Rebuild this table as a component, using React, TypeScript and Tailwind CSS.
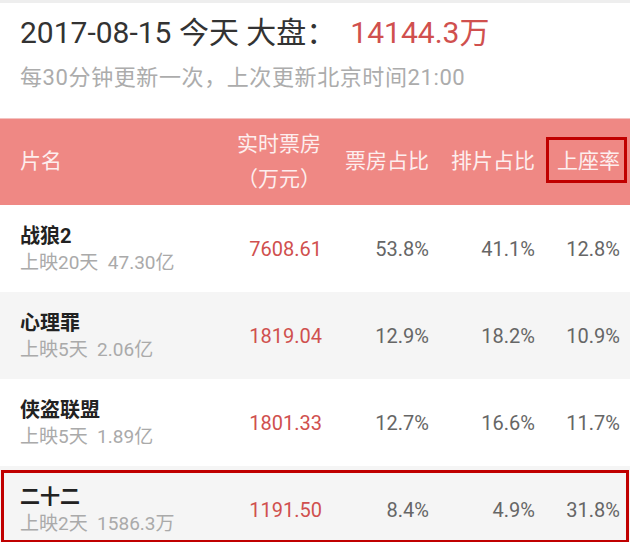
import React from "react";

const rows = [
  { name: "战狼2", sub: "上映20天  47.30亿", box: "7608.61", a: "53.8%", b: "41.1%", c: "12.8%", bg: "bg-white" },
  { name: "心理罪", sub: "上映5天  2.06亿", box: "1819.04", a: "12.9%", b: "18.2%", c: "10.9%", bg: "bg-[#f5f5f5]" },
  { name: "侠盗联盟", sub: "上映5天  1.89亿", box: "1801.33", a: "12.7%", b: "16.6%", c: "11.7%", bg: "bg-white" },
  { name: "二十二", sub: "上映2天  1586.3万", box: "1191.50", a: "8.4%", b: "4.9%", c: "31.8%", bg: "bg-[#f5f5f5]", boxed: true },
];

export default function App() {
  return (
    <div
      className="w-[630px] h-[542px] overflow-hidden bg-white"
      style={{ fontFamily: 'Roboto, "Noto Sans CJK SC", sans-serif' }}
    >
      <div className="h-[3px] bg-[#eeeeee]" />
      <div className="h-[115px] flex flex-col pl-[20px]">
        <div className="mt-[12px] text-[30px] leading-[36px] text-[#333333] whitespace-pre flex items-baseline">
          <span>2017-08-15 今天 大盘：</span>
          <span className="ml-[14px] text-[#d0504e]">14144.3万</span>
        </div>
        <div className="mt-[13px] text-[22px] leading-[28px] tracking-[0.6px] text-[#acacac]">
          每30分钟更新一次，上次更新北京时间21:00
        </div>
      </div>
      <div className="h-[1px] bg-[#f3c2c0]" />
      <div className="relative h-[86px] bg-[#ef8884] flex items-center text-[21px] text-[#fdeeee]">
        <div className="w-[222px] pl-[20px]">片名</div>
        <div className="w-[100px] flex justify-end">
          <div className="w-[86px] text-center leading-[35px]">
            <div>实时票房</div>
            <div>（万元）</div>
          </div>
        </div>
        <div className="w-[107px] text-right">票房占比</div>
        <div className="w-[106px] text-right">排片占比</div>
        <div className="w-[85px] text-right">上座率</div>
        <div className="absolute left-[546px] top-[18px] w-[81px] h-[46px] border-[3px] border-[#c00000]" />
      </div>
      {rows.map((r) => (
        <div key={r.name} className={`${r.bg} relative h-[87px] flex items-center`}>
          <div className="w-[222px] pl-[20px] flex flex-col">
            <div className="text-[20px] leading-[28px] font-bold text-[#222222]">{r.name}</div>
            <div className="text-[19px] leading-[26px] text-[#aaaaaa] whitespace-pre">{r.sub}</div>
          </div>
          <div className="w-[100px] text-right text-[20px] text-[#d0504e]">{r.box}</div>
          <div className="w-[107px] text-right text-[20px] text-[#666666]">{r.a}</div>
          <div className="w-[106px] text-right text-[20px] text-[#666666]">{r.b}</div>
          <div className="w-[85px] text-right text-[20px] text-[#666666]">{r.c}</div>
          {r.boxed && (
            <div className="absolute left-[1px] right-[1px] top-[4px] h-[73px] border-[3px] border-[#c00000]" />
          )}
        </div>
      ))}
    </div>
  );
}
